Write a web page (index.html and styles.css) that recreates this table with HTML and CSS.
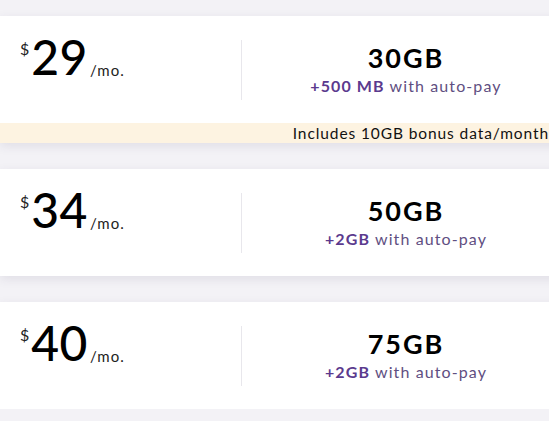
FILE: index.html
```html
<!DOCTYPE html>
<html>
<head>
<meta charset="utf-8">
<link rel="stylesheet" href="styles.css">
</head>
<body>
<div class="list">
  <div class="card">
    <div class="row">
      <div class="price"><span class="cur">$</span><span class="amt">29</span><span class="per">/mo.</span></div>
      <div class="data">
        <div class="gb">30GB</div>
        <div class="bonus"><b>+500 MB</b> with auto-pay</div>
      </div>
    </div>
    <div class="banner">Includes 10GB bonus data/month</div>
  </div>
  <div class="card">
    <div class="row">
      <div class="price"><span class="cur">$</span><span class="amt">34</span><span class="per">/mo.</span></div>
      <div class="data">
        <div class="gb">50GB</div>
        <div class="bonus"><b>+2GB</b> with auto-pay</div>
      </div>
    </div>
  </div>
  <div class="card">
    <div class="row">
      <div class="price"><span class="cur">$</span><span class="amt">40</span><span class="per">/mo.</span></div>
      <div class="data">
        <div class="gb">75GB</div>
        <div class="bonus"><b>+2GB</b> with auto-pay</div>
      </div>
    </div>
  </div>
</div>
</body>
</html>
```
FILE: styles.css
```css
html, body {
  margin: 0;
  padding: 0;
  background: #f3f2f6;
  font-family: "Lato", "Noto Sans", sans-serif;
  overflow: hidden;
}
.list {
  display: flex;
  flex-direction: column;
  gap: 26px;
  padding-top: 16px;
  width: 600px;
}
.card {
  background: #fff;
  box-shadow: 0 3px 10px rgba(60, 50, 90, 0.10);
}
.row {
  display: flex;
  align-items: center;
  height: 107px;
}
.price {
  width: 241px;
  box-sizing: border-box;
  padding-left: 20px;
  display: flex;
  align-items: flex-start;
  height: 60px;
  color: #000;
}
.cur {
  font-size: 16px;
  line-height: 1;
  margin-top: 1px;
  margin-right: 2px;
  color: #222;
}
.amt {
  font-size: 48px;
  font-weight: 500;
  line-height: 0.9;
  margin-top: -5px;
  letter-spacing: 0.5px;
}
.per {
  font-size: 15px;
  margin-top: 21px;
  margin-left: 2px;
  color: #222;
  letter-spacing: 1px;
}
.data {
  flex: 1;
  border-left: 1px solid #e8e7ec;
  height: 60px;
  display: flex;
  flex-direction: column;
  align-items: center;
  padding-right: 30px;
}
.gb {
  font-size: 27px;
  font-weight: 700;
  line-height: 32px;
  color: #000;
  letter-spacing: 2px;
  margin-top: 2px;
}
.bonus {
  font-size: 16px;
  line-height: 18px;
  margin-top: 3px;
  color: #5f4f82;
  letter-spacing: 1.1px;
}
.bonus b {
  color: #5b3a8e;
  font-weight: 700;
}
.banner {
  background: #fdf3e1;
  height: 20px;
  line-height: 20px;
  font-size: 15.5px;
  color: #111;
  text-align: right;
  padding-right: 51px;
  letter-spacing: 0.9px;
}
```
